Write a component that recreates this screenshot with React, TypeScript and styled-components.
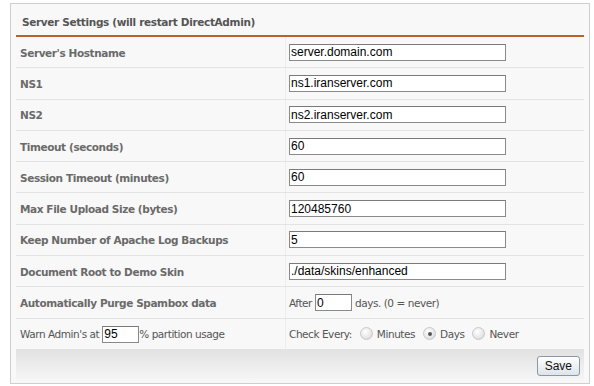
import styled, { createGlobalStyle } from "styled-components";

const GlobalStyle = createGlobalStyle`
  html, body {
    margin: 0;
    padding: 0;
    background: #ffffff;
  }
  body {
    font-family: "DejaVu Sans", Verdana, sans-serif;
  }
`;

const Page = styled.div`
  padding: 3px 3px 0 10px;
`;

const Panel = styled.div`
  width: 568px;
  border: 1px solid #cfcfcf;
  background: #f8f8f8;
  padding: 0 5px 0 5px;
`;

const Header = styled.div`
  box-sizing: border-box;
  height: 33px;
  display: flex;
  align-items: center;
  padding: 4px 0 0 6px;
  font-size: 10.5px;
  letter-spacing: -0.35px;
  font-weight: bold;
  color: #555555;
  border-bottom: 2px solid #b8622a;
`;

const Row = styled.div`
  display: grid;
  grid-template-columns: 270px 1fr;
  height: 30.3px;
  border-bottom: 1px solid #e3e3e3;
`;

const Label = styled.div<{ $plain?: boolean }>`
  display: flex;
  align-items: center;
  padding: 1px 0 0 4px;
  font-size: 10.5px;
  letter-spacing: ${(p) => (p.$plain ? "-0.45px" : "-0.4px")};
  font-weight: ${(p) => (p.$plain ? "normal" : "bold")};
  color: ${(p) => (p.$plain ? "#555555" : "#6a6a6a")};
  border-right: 1px solid #ececec;
  white-space: nowrap;
`;

const Value = styled.div`
  display: flex;
  align-items: center;
  padding-left: 3px;
  font-size: 10.5px;
  letter-spacing: -0.45px;
  color: #555555;
  white-space: nowrap;
`;

const TextInput = styled.input<{ $w?: number }>`
  box-sizing: border-box;
  width: ${(p) => p.$w ?? 217}px;
  height: 17px;
  padding: 0 1px;
  margin: 0;
  border: 1px solid #8a8a8a;
  border-top-color: #7a7a7a;
  background: #ffffff;
  font-family: "Liberation Sans", Arial, sans-serif;
  font-size: 12px;
  letter-spacing: 0;
  color: #000000;
  outline: none;
`;

const Gap = styled.span`
  display: inline-block;
  width: 3px;
`;

const RadioGroup = styled.label`
  display: inline-flex;
  align-items: center;
  margin-left: 8px;
  gap: 4px;
`;

const Radio = styled.input`
  appearance: none;
  box-sizing: border-box;
  width: 13px;
  height: 13px;
  margin: 0;
  border-radius: 50%;
  border: 1px solid #c8c8c8;
  background: radial-gradient(circle at 40% 35%, #ffffff 0%, #e8e8e8 55%, #d0d0d0 100%);
  position: relative;

  &:checked::after {
    content: "";
    position: absolute;
    left: 3.5px;
    top: 3.5px;
    width: 4px;
    height: 4px;
    border-radius: 50%;
    background: #555555;
  }
`;

const Footer = styled.div`
  height: 33px;
  display: flex;
  align-items: center;
  justify-content: flex-end;
  padding-right: 4px;
  background: linear-gradient(#e2e2e2, #f8f8f8);
`;

const SaveButton = styled.button`
  height: 20px;
  padding: 0 7px;
  border: 1px solid #8a98a6;
  border-radius: 3px;
  background: linear-gradient(#ffffff, #dde4ea);
  font-family: "Liberation Sans", Arial, sans-serif;
  font-size: 12px;
  color: #111111;
`;

const rows: { label: string; value: string }[] = [
  { label: "Server's Hostname", value: "server.domain.com" },
  { label: "NS1", value: "ns1.iranserver.com" },
  { label: "NS2", value: "ns2.iranserver.com" },
  { label: "Timeout (seconds)", value: "60" },
  { label: "Session Timeout (minutes)", value: "60" },
  { label: "Max File Upload Size (bytes)", value: "120485760" },
  { label: "Keep Number of Apache Log Backups", value: "5" },
  { label: "Document Root to Demo Skin", value: "./data/skins/enhanced" },
];

export default function App() {
  return (
    <Page>
      <GlobalStyle />
      <Panel>
        <Header>Server Settings (will restart DirectAdmin)</Header>
        {rows.map((r) => (
          <Row key={r.label}>
            <Label>{r.label}</Label>
            <Value>
              <TextInput defaultValue={r.value} />
            </Value>
          </Row>
        ))}
        <Row>
          <Label>Automatically Purge Spambox data</Label>
          <Value>
            After
            <Gap />
            <TextInput $w={37} defaultValue="0" />
            <Gap />
            days. (0 = never)
          </Value>
        </Row>
        <Row>
          <Label $plain>
            Warn Admin's at
            <Gap />
            <TextInput $w={37} defaultValue="95" />
            % partition usage
          </Label>
          <Value>
            Check Every:
            <RadioGroup>
              <Radio type="radio" name="every" />
              Minutes
            </RadioGroup>
            <RadioGroup>
              <Radio type="radio" name="every" defaultChecked />
              Days
            </RadioGroup>
            <RadioGroup>
              <Radio type="radio" name="every" />
              Never
            </RadioGroup>
          </Value>
        </Row>
        <Footer>
          <SaveButton>Save</SaveButton>
        </Footer>
      </Panel>
    </Page>
  );
}
